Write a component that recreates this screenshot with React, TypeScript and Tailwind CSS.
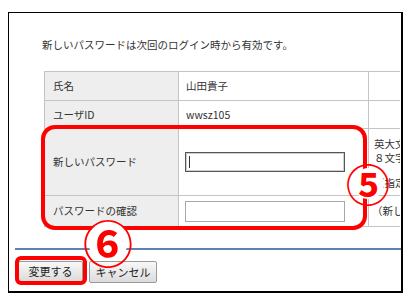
import React from "react";

const font = { fontFamily: '"Noto Sans CJK JP", "Noto Sans", sans-serif' };

export default function App() {
  return (
    <div className="relative flex items-start w-[411px] h-[301px] overflow-hidden bg-white pt-[12px] pl-[8px]" style={font}>
      <div className="relative shrink-0 w-[395px] h-[281px] border border-black border-r-2 border-b-2 overflow-hidden bg-white">
        <p className="pl-[33px] pt-[25px] text-[10.5px] leading-[14px] text-[#333] whitespace-nowrap">
          新しいパスワードは次回のログイン時から有効です。
        </p>
        <div className="ml-[35px] mt-[19px] w-[356px] overflow-hidden">
          <table className="table-fixed border-collapse w-[524px] text-[10.5px] text-[#333]">
            <colgroup>
              <col className="w-[134px]" />
              <col className="w-[190px]" />
              <col className="w-[200px]" />
            </colgroup>
            <tbody>
              <tr className="h-[29px]">
                <td className="border border-[#c4c4c4] bg-[#eeeeee] pl-[8px]">氏名</td>
                <td className="border border-[#c4c4c4] pl-[7px]">山田貴子</td>
                <td className="border border-[#c4c4c4]"></td>
              </tr>
              <tr className="h-[28px]">
                <td className="border border-[#c4c4c4] bg-[#eeeeee] pl-[8px]">ユーザID</td>
                <td className="border border-[#c4c4c4] pl-[7px]">wwsz105</td>
                <td className="border border-[#c4c4c4]"></td>
              </tr>
              <tr className="h-[67px]">
                <td className="border border-[#c4c4c4] bg-[#eeeeee] pl-[8px]">新しいパスワード</td>
                <td className="border border-[#c4c4c4] pl-[6px]">
                  <div className="relative w-[160px] h-[20px] border border-[#555] shadow-[inset_0_0_0_1px_#cfcfcf] bg-white">
                    <div className="absolute left-[3px] top-[3px] w-[1px] h-[12px] bg-[#333]" />
                  </div>
                </td>
                <td className="border border-[#c4c4c4] align-top pl-[5px] pt-[8px] whitespace-nowrap leading-[14px]">
                  <div>英大文字・英小文字・数字を含む</div>
                  <div>８文字以上で入力してください</div>
                  <div className="mt-[11px]">（指定文字以外は使用不可）</div>
                </td>
              </tr>
              <tr className="h-[31px]">
                <td className="border border-[#c4c4c4] bg-[#eeeeee] pl-[8px]">パスワードの確認</td>
                <td className="border border-[#c4c4c4] pl-[6px]">
                  <div className="w-[160px] h-[21px] border border-[#a8a8a8] bg-white" />
                </td>
                <td className="border border-[#c4c4c4] pl-[3px] whitespace-nowrap">（新しいパスワードを再入力）</td>
              </tr>
            </tbody>
          </table>
        </div>
        <div className="ml-[6px] mt-[21px] h-[2px] bg-[#5f82ae]" />
        <div className="flex gap-[6px] ml-[9px] mt-[11px]">
          <button className="w-[65px] h-[21px] border border-[#9a9a9a] rounded-[2px] bg-gradient-to-b from-[#f8f8f8] to-[#dcdcdc] text-[11px] text-[#222] leading-none">
            変更する
          </button>
          <button className="w-[68px] h-[22px] border border-[#9a9a9a] rounded-[2px] bg-gradient-to-b from-[#f8f8f8] to-[#dcdcdc] text-[11px] text-[#222] leading-none">
            キャンセル
          </button>
        </div>

        {/* annotations */}
        <div className="absolute left-[32px] top-[112px] w-[326px] h-[105px] border-[4px] border-[#ff0000] rounded-[14px]" />
        <div className="absolute left-[6px] top-[243px] w-[72px] h-[29px] border-[4px] border-[#ff0000] rounded-[6px]" />
        <div className="absolute left-[344px] top-[155px] w-[31px] h-[31px] rounded-full bg-white" />
        <div className="absolute left-[329px] top-[140px] w-[60px] h-[60px] flex items-center justify-center text-[#ff0000] text-[44px] font-bold leading-none">
          ⑤
        </div>
        <div className="absolute left-[79px] top-[208px] w-[40px] h-[40px] rounded-full bg-white" />
        <div className="absolute left-[69px] top-[198px] w-[60px] h-[60px] flex items-center justify-center text-[#ff0000] text-[50px] font-bold leading-none">
          ⑥
        </div>
      </div>
    </div>
  );
}
